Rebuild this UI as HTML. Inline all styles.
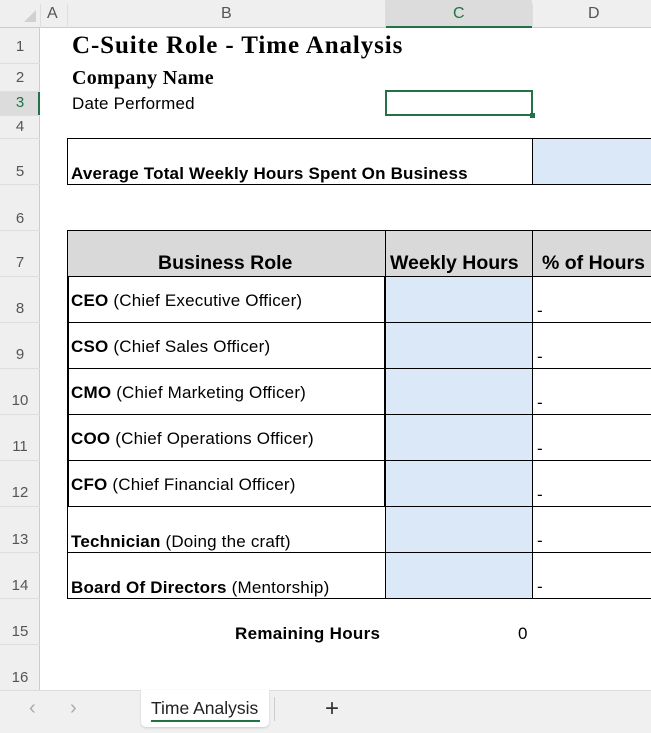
<!DOCTYPE html>
<html><head><style>
*{margin:0;padding:0;box-sizing:border-box}
body{width:651px;height:733px;position:relative;background:#fff;font-family:"Liberation Sans",sans-serif;overflow:hidden;color:#000}
.a{position:absolute}
.hdr{background:#efefef;color:#555;font-size:16px;text-align:center}
.rn{position:absolute;left:0;width:40px;text-align:center;font-size:15px;color:#555}
.gl{position:absolute;background:#dedede}
.t{position:absolute;font-size:17px;white-space:nowrap}
.r{letter-spacing:0.2px}
.b{font-weight:bold}
</style></head><body>
<div class="a hdr" style="left:0;top:0;width:651px;height:28px;border-bottom:1px solid #ccc"></div>
<div class="a" style="left:385px;top:0;width:147px;height:28px;background:#dcdcdc;border-bottom:2px solid #217346"></div>
<div class="a" style="left:24px;top:10px;width:0;height:0;border-left:12px solid transparent;border-bottom:12px solid #d0d0d0"></div>
<div class="t" style="left:47px;top:5px;color:#555;font-size:16px">A</div>
<div class="t" style="left:221px;top:5px;color:#555;font-size:16px">B</div>
<div class="t" style="left:453px;top:5px;color:#217346;font-size:16px">C</div>
<div class="t" style="left:588px;top:5px;color:#555;font-size:16px">D</div>
<div class="gl" style="left:40px;top:4px;width:1px;height:24px"></div>
<div class="gl" style="left:67px;top:4px;width:1px;height:24px"></div>
<div class="gl" style="left:385px;top:4px;width:1px;height:24px"></div>
<div class="gl" style="left:532px;top:4px;width:1px;height:24px"></div>
<div class="a" style="left:0;top:28px;width:40px;height:662px;background:#efefef;border-right:1px solid #ccc"></div>
<div class="a" style="left:0;top:91px;width:40px;height:24px;background:#dcdcdc;border-right:2px solid #217346"></div>
<div class="rn" style="top:38px">1</div>
<div class="rn" style="top:69px">2</div>
<div class="rn" style="top:94px;color:#217346">3</div>
<div class="rn" style="top:118px">4</div>
<div class="rn" style="top:163px">5</div>
<div class="rn" style="top:210px">6</div>
<div class="rn" style="top:254px">7</div>
<div class="rn" style="top:300px">8</div>
<div class="rn" style="top:346px">9</div>
<div class="rn" style="top:392px">10</div>
<div class="rn" style="top:438px">11</div>
<div class="rn" style="top:484px">12</div>
<div class="rn" style="top:531px">13</div>
<div class="rn" style="top:577px">14</div>
<div class="rn" style="top:623px">15</div>
<div class="rn" style="top:669px">16</div>
<div class="gl" style="left:0;top:63px;width:40px;height:1px"></div>
<div class="gl" style="left:0;top:91px;width:40px;height:1px"></div>
<div class="gl" style="left:0;top:115px;width:40px;height:1px"></div>
<div class="gl" style="left:0;top:138px;width:40px;height:1px"></div>
<div class="gl" style="left:0;top:184px;width:40px;height:1px"></div>
<div class="gl" style="left:0;top:230px;width:40px;height:1px"></div>
<div class="gl" style="left:0;top:276px;width:40px;height:1px"></div>
<div class="gl" style="left:0;top:322px;width:40px;height:1px"></div>
<div class="gl" style="left:0;top:368px;width:40px;height:1px"></div>
<div class="gl" style="left:0;top:414px;width:40px;height:1px"></div>
<div class="gl" style="left:0;top:460px;width:40px;height:1px"></div>
<div class="gl" style="left:0;top:506px;width:40px;height:1px"></div>
<div class="gl" style="left:0;top:552px;width:40px;height:1px"></div>
<div class="gl" style="left:0;top:598px;width:40px;height:1px"></div>
<div class="gl" style="left:0;top:644px;width:40px;height:1px"></div>
<div class="t b" style="left:72px;top:32px;font-family:'Liberation Serif',serif;font-size:25px;letter-spacing:0.9px">C-Suite Role - Time Analysis</div>
<div class="t b" style="left:72px;top:67px;font-family:'Liberation Serif',serif;font-size:20px;letter-spacing:0.3px">Company Name</div>
<div class="t r" style="left:72px;top:94px">Date Performed</div>
<div class="a" style="left:385px;top:90px;width:148px;height:26px;border:2px solid #217346"></div>
<div class="a" style="left:530px;top:113px;width:5px;height:5px;background:#217346"></div>
<div class="a" style="left:532px;top:138px;width:119px;height:46px;background:#dbe8f7"></div>
<div class="a" style="left:67px;top:138px;width:600px;height:47px;border:1px solid #000"></div>
<div class="a" style="left:532px;top:138px;width:1px;height:46px;background:#000"></div>
<div class="t b" style="left:71px;top:164px;font-size:17px;letter-spacing:0.2px">Average Total Weekly Hours Spent On Business</div>
<div class="a" style="left:67px;top:230px;width:584px;height:46px;background:#d9d9d9"></div>
<div class="a" style="left:385px;top:276px;width:147px;height:322px;background:#dbe8f7"></div>
<div class="a" style="left:67px;top:230px;width:600px;height:369px;border:1px solid #000"></div>
<div class="a" style="left:385px;top:230px;width:1px;height:368px;background:#000"></div>
<div class="a" style="left:532px;top:230px;width:1px;height:368px;background:#000"></div>
<div class="a" style="left:67px;top:276px;width:584px;height:1px;background:#000"></div>
<div class="a" style="left:67px;top:322px;width:584px;height:1px;background:#000"></div>
<div class="a" style="left:67px;top:368px;width:584px;height:1px;background:#000"></div>
<div class="a" style="left:67px;top:414px;width:584px;height:1px;background:#000"></div>
<div class="a" style="left:67px;top:460px;width:584px;height:1px;background:#000"></div>
<div class="a" style="left:67px;top:506px;width:584px;height:1px;background:#000"></div>
<div class="a" style="left:67px;top:552px;width:584px;height:1px;background:#000"></div>
<div class="a" style="left:67px;top:276px;width:2px;height:230px;background:#000"></div>
<div class="a" style="left:384px;top:276px;width:2px;height:230px;background:#000"></div>
<div class="t b" style="left:158px;top:252px;font-size:19.5px">Business Role</div>
<div class="t b" style="left:390px;top:252px;font-size:19.5px">Weekly Hours</div>
<div class="t b" style="left:542px;top:252px;font-size:19.5px">% of Hours</div>
<div class="t r" style="left:71px;top:291px"><b>CEO</b> (Chief Executive Officer)</div>
<div class="t r" style="left:71px;top:337px"><b>CSO</b> (Chief Sales Officer)</div>
<div class="t r" style="left:71px;top:383px"><b>CMO</b> (Chief Marketing Officer)</div>
<div class="t r" style="left:71px;top:429px"><b>COO</b> (Chief Operations Officer)</div>
<div class="t r" style="left:71px;top:475px"><b>CFO</b> (Chief Financial Officer)</div>
<div class="t r" style="left:71px;top:532px"><b>Technician</b> (Doing the craft)</div>
<div class="t r" style="left:71px;top:578px"><b>Board Of Directors</b> (Mentorship)</div>
<div class="t" style="left:537px;top:301px">-</div>
<div class="t" style="left:537px;top:347px">-</div>
<div class="t" style="left:537px;top:393px">-</div>
<div class="t" style="left:537px;top:439px">-</div>
<div class="t" style="left:537px;top:485px">-</div>
<div class="t" style="left:537px;top:531px">-</div>
<div class="t" style="left:537px;top:577px">-</div>
<div class="t b" style="left:235px;top:624px;font-size:17px;letter-spacing:0.3px">Remaining Hours</div>
<div class="t" style="left:518px;top:624px">0</div>
<div class="a" style="left:0;top:690px;width:651px;height:43px;background:#f0f0f0;border-top:1px solid #ddd"></div>
<div class="t" style="left:29px;top:697px;color:#aaa;font-size:20px">&#8249;</div>
<div class="t" style="left:70px;top:697px;color:#aaa;font-size:20px">&#8250;</div>
<div class="a" style="left:141px;top:690px;width:128px;height:37px;background:#fff;border-radius:0 0 5px 5px;box-shadow:0 1px 2px #ccc"></div>
<div class="t" style="left:151px;top:698px;color:#222;font-size:17.5px">Time Analysis</div>
<div class="a" style="left:151px;top:720px;width:109px;height:2px;background:#217346"></div>
<div class="a" style="left:274px;top:697px;width:1px;height:24px;background:#ccc"></div>
<div class="t" style="left:325px;top:695px;font-size:24px;color:#333">+</div>
</body></html>
